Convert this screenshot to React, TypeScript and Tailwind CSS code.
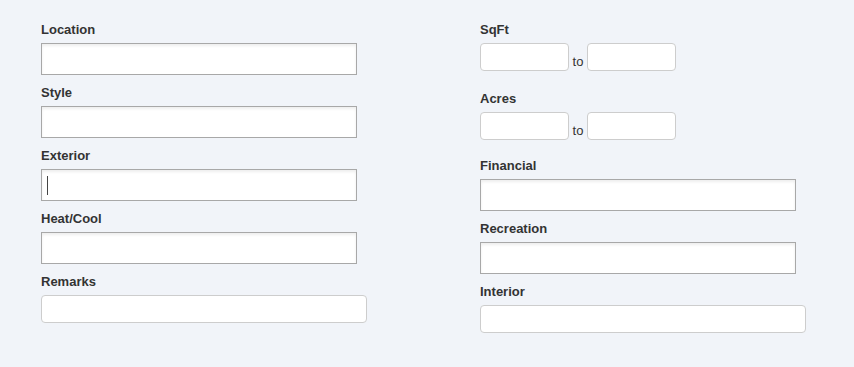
import React from "react";

const font = { fontFamily: '"Liberation Sans", Arial, Helvetica, sans-serif' };

function Label({ children }: { children: React.ReactNode }) {
  return (
    <div className="text-[13px] leading-[17px] font-bold text-[#333] mb-[5px]">{children}</div>
  );
}

function BigInput({ caret = false }: { caret?: boolean }) {
  return (
    <div className="relative w-[316px] h-[32px] bg-white border border-[#a8a8a8] shadow-[inset_0_2px_3px_rgba(0,0,0,0.07)]">
      {caret && <div className="absolute left-[5px] top-[6px] w-px h-[19px] bg-[#444]" />}
    </div>
  );
}

function RoundInput({ w }: { w: string }) {
  return <div className={`${w} bg-white border border-[#cdcdcd] rounded-[4px]`} />;
}

function RangeRow() {
  return (
    <div className="flex items-end">
      <div className="w-[89px] h-[28px] bg-white border border-[#cdcdcd] rounded-[4px]" />
      <span className="w-[18px] text-center text-[13px] leading-[17px] text-[#333] pb-[1px]">to</span>
      <div className="w-[89px] h-[28px] bg-white border border-[#cdcdcd] rounded-[4px]" />
    </div>
  );
}

export default function App() {
  return (
    <div className="w-full h-[367px] bg-[#f1f4f9] flex pl-[41px] pt-[21px]" style={font}>
      <div className="w-[439px] flex flex-col">
        <Label>Location</Label>
        <BigInput />
        <div className="mt-[9px]">
          <Label>Style</Label>
          <BigInput />
        </div>
        <div className="mt-[9px]">
          <Label>Exterior</Label>
          <BigInput caret />
        </div>
        <div className="mt-[9px]">
          <Label>Heat/Cool</Label>
          <BigInput />
        </div>
        <div className="mt-[9px]">
          <Label>Remarks</Label>
          <RoundInput w="w-[326px] h-[28px]" />
        </div>
      </div>
      <div className="flex flex-col">
        <Label>SqFt</Label>
        <RangeRow />
        <div className="mt-[19px]">
          <Label>Acres</Label>
          <RangeRow />
        </div>
        <div className="mt-[17px]">
          <Label>Financial</Label>
          <BigInput />
        </div>
        <div className="mt-[9px]">
          <Label>Recreation</Label>
          <BigInput />
        </div>
        <div className="mt-[9px]">
          <Label>Interior</Label>
          <RoundInput w="w-[326px] h-[28px]" />
        </div>
      </div>
    </div>
  );
}
